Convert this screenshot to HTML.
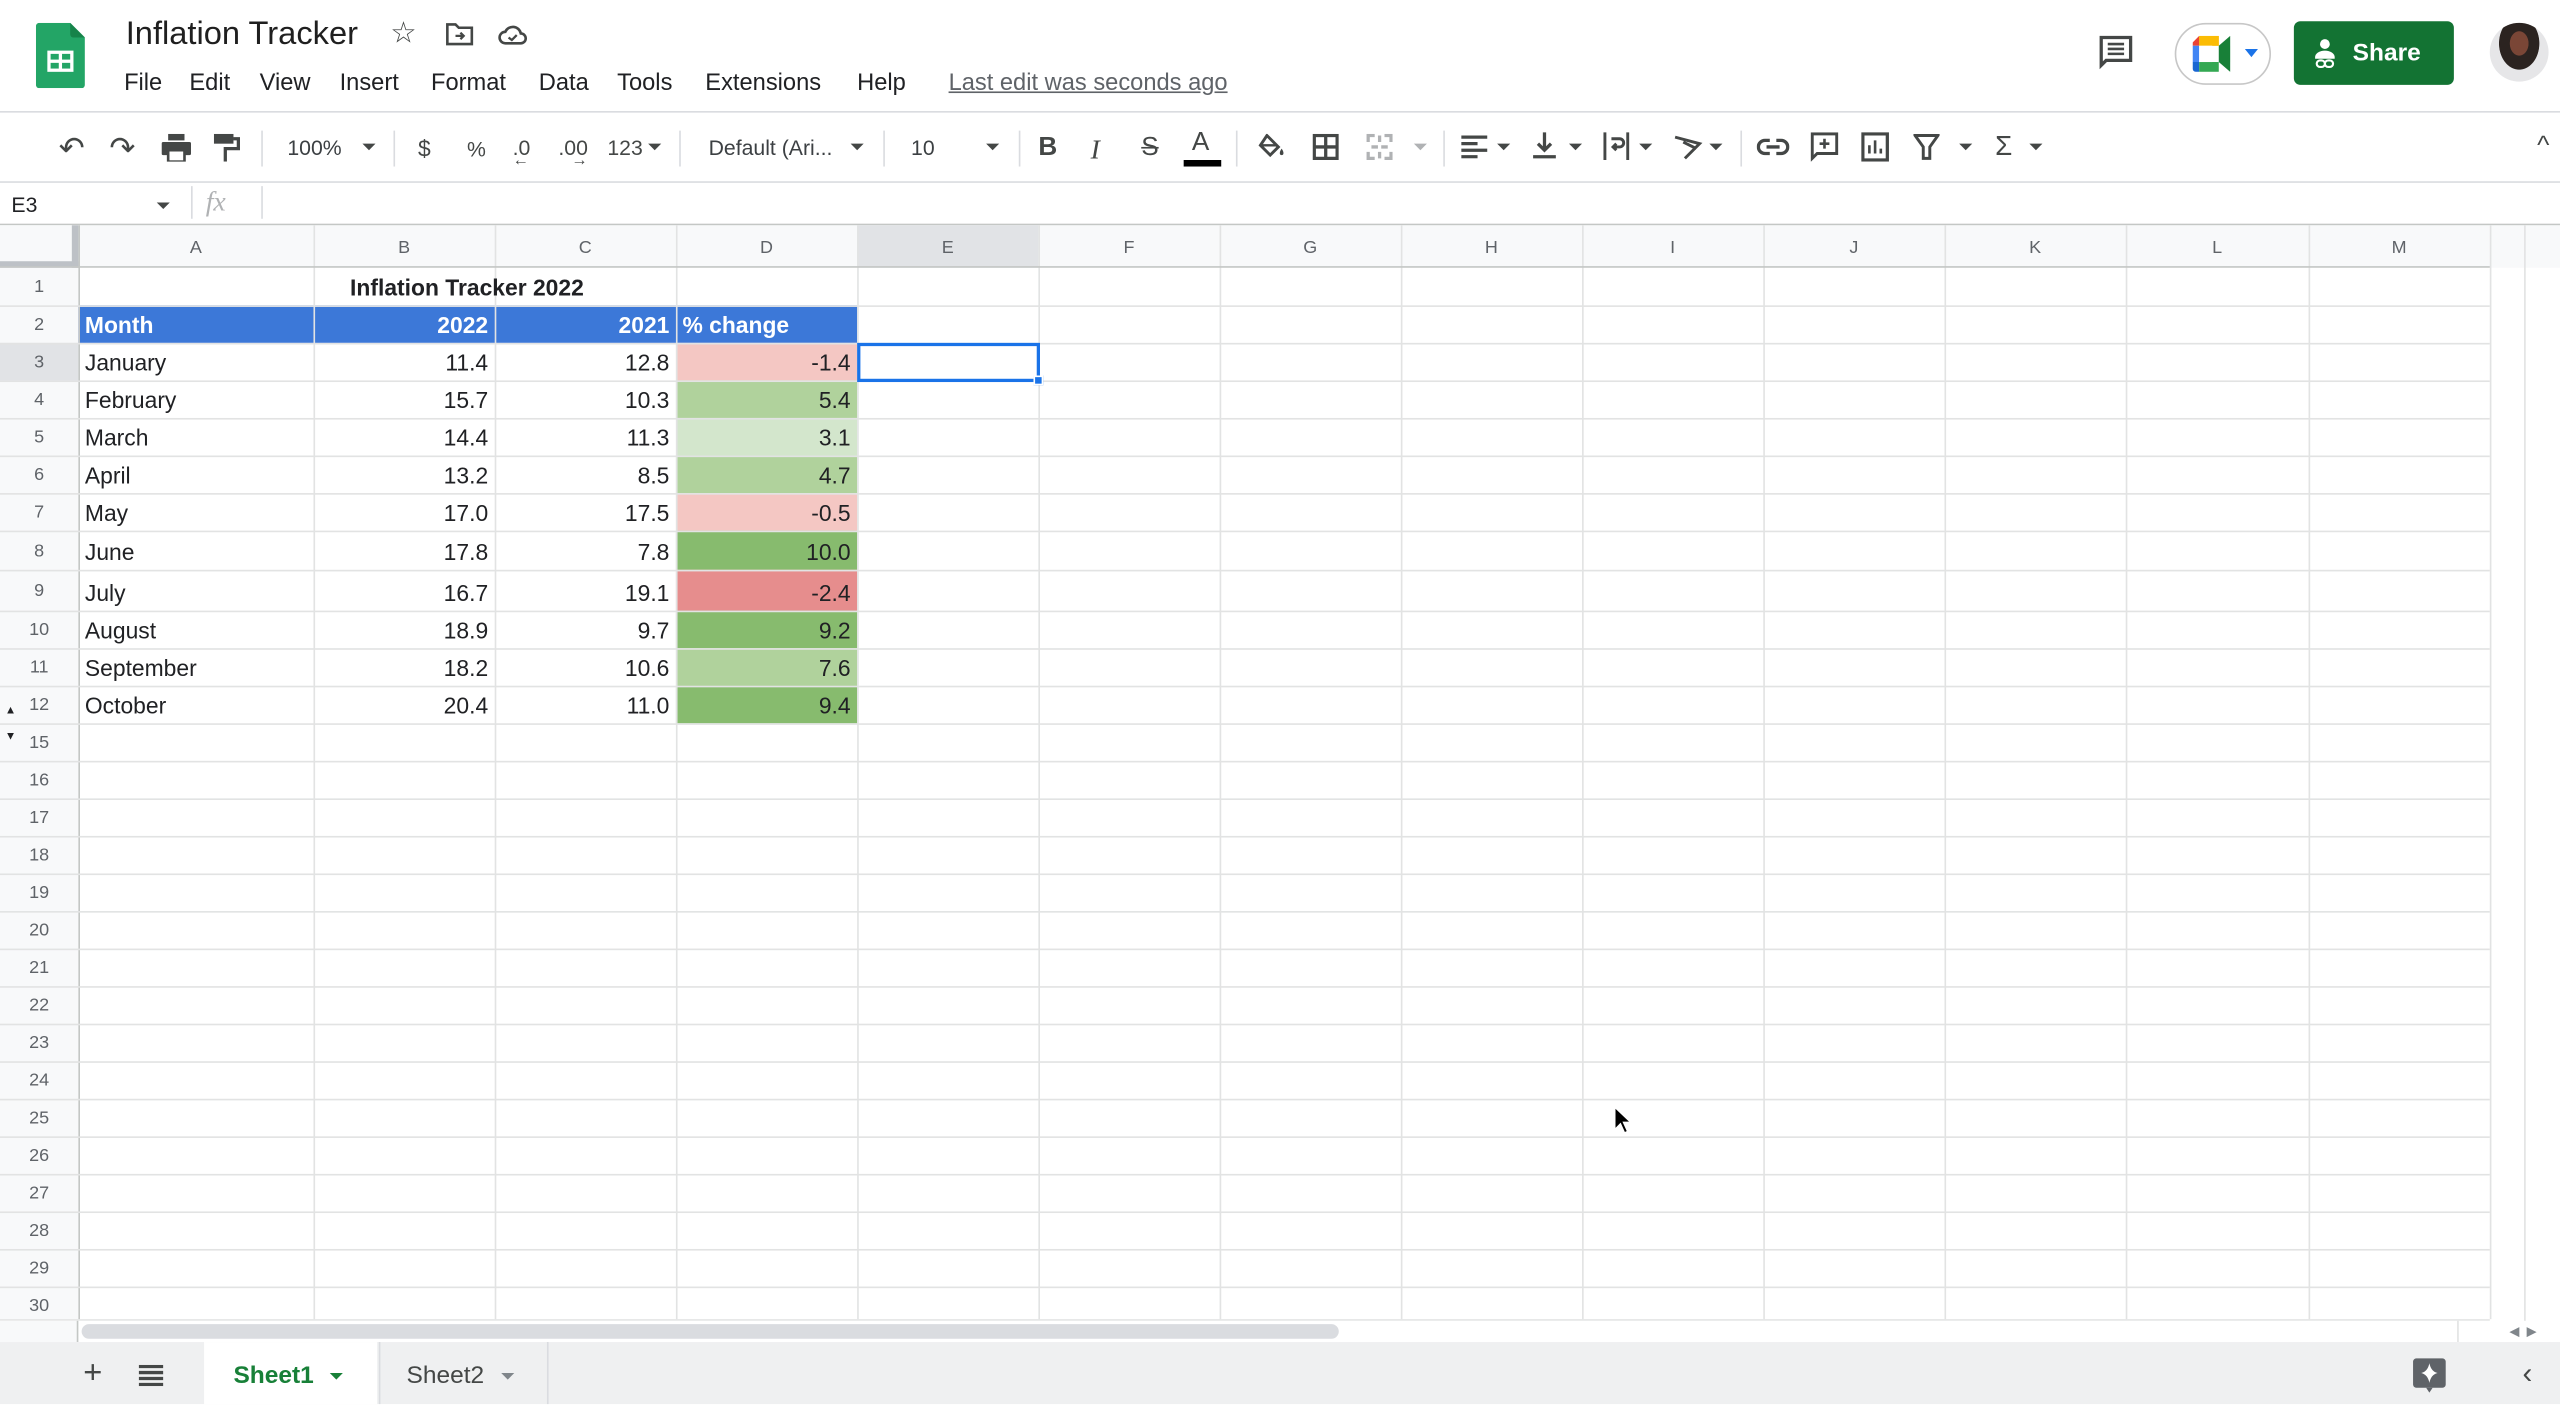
<!DOCTYPE html>
<html><head><meta charset="utf-8"><style>
*{margin:0;padding:0;box-sizing:border-box}
html,body{width:2560px;height:1404px;overflow:hidden;background:#fff}
#s{position:absolute;left:0;top:0;width:1568px;height:860px;transform:scale(1.63265);transform-origin:0 0;font-family:"Liberation Sans",Arial,sans-serif;color:#202124;background:#fff}
.a{position:absolute}
.m{font-size:14.5px;top:43px;color:#202124}
.ic{position:absolute;color:#444746;font-size:14px}
.sep{position:absolute;top:80px;width:1px;height:22px;background:#dadce0}
.vl{position:absolute;top:138px;height:670px;width:1px;background:#e2e3e3}
.hl{position:absolute;left:0;width:1525px;height:1px;background:#e2e3e3}
.rn{position:absolute;left:0;width:48px;text-align:center;font-size:11px;color:#5f6368;margin-top:1px}
.ch{position:absolute;top:139px;height:26px;line-height:26px;text-align:center;font-size:11px;color:#5f6368}
.c{position:absolute;font-size:14px;height:23px;line-height:25px;padding:0 4px;white-space:nowrap}
.r{text-align:right}
.dd{display:inline-block;width:0;height:0;border-left:4px solid transparent;border-right:4px solid transparent;border-top:4px solid #444746;vertical-align:middle}
</style></head><body><div id="s">
<svg class="a" style="left:22px;top:14px" width="30" height="40" viewBox="0 0 30 40"><path d="M2 0h19l9 9v29a2 2 0 0 1-2 2H2a2 2 0 0 1-2-2V2a2 2 0 0 1 2-2z" fill="#23a566"/><path d="M21 0l9 9h-7a2 2 0 0 1-2-2z" fill="#16834a"/><rect x="7" y="17" width="16" height="13" fill="#fff"/><rect x="9" y="19" width="5" height="3.5" fill="#23a566"/><rect x="16" y="19" width="5" height="3.5" fill="#23a566"/><rect x="9" y="24.5" width="5" height="3.5" fill="#23a566"/><rect x="16" y="24.5" width="5" height="3.5" fill="#23a566"/></svg>
<div class="a" style="left:77px;top:10px;font-size:20px;color:#1f1f1f">Inflation Tracker</div>
<div class="a" style="left:239px;top:10px;font-size:18px;color:#444746">☆</div>
<svg class="a" style="left:273px;top:14px" width="17" height="14" viewBox="0 0 17 14"><path d="M1 1h5l2 2h8v10H1z" fill="none" stroke="#444746" stroke-width="1.6"/><path d="M6 8h5M9 6l2 2-2 2" fill="none" stroke="#444746" stroke-width="1.4"/></svg>
<svg class="a" style="left:305px;top:14px" width="18" height="14" viewBox="0 0 18 14"><path d="M4.5 12.5a3.5 3.5 0 0 1 0-7 5 5 0 0 1 9.5 1 3 3 0 0 1 0 6z" fill="none" stroke="#444746" stroke-width="1.6"/><path d="M6.5 9l2 1.5 3-3" fill="none" stroke="#444746" stroke-width="1.4"/></svg>
<div class="a m" style="left:76px">File</div><div class="a m" style="left:116px">Edit</div><div class="a m" style="left:159px">View</div><div class="a m" style="left:208px">Insert</div><div class="a m" style="left:264px">Format</div><div class="a m" style="left:330px">Data</div><div class="a m" style="left:378px">Tools</div><div class="a m" style="left:432px">Extensions</div><div class="a m" style="left:525px">Help</div>
<div class="a m" style="left:581px;color:#5f6368;text-decoration:underline">Last edit was seconds ago</div>
<svg class="a" style="left:1285px;top:21px" width="22" height="22" viewBox="0 0 22 22"><path d="M2 2h18v14H5l-3 3z" fill="none" stroke="#444746" stroke-width="2"/><path d="M6 6h10M6 9h10M6 12h10" stroke="#444746" stroke-width="1.6"/></svg>
<div class="a" style="left:1332px;top:14px;width:59px;height:38px;border:1px solid #c7c7c7;border-radius:19px;background:#fff"></div>
<svg class="a" style="left:1343px;top:22px" width="28" height="22" viewBox="0 0 28 22"><path d="M4 0h12v6H4z" fill="#fbbc04"/><path d="M0 4l4-4v6H0z" fill="#ea4335"/><path d="M0 6h4v10H0z" fill="#4285f4"/><path d="M0 16h4v6H2a2 2 0 0 1-2-2z" fill="#1967d2"/><path d="M4 16h12v6H4z" fill="#34a853"/><path d="M16 6v10l7 6V0l-7 6z" fill="#188038"/><path d="M16 0v6H4V0z" fill="#fbbc04"/><rect x="4" y="6" width="8" height="10" fill="#fff"/></svg>
<div class="a" style="left:1375px;top:30px;width:0;height:0;border-left:4px solid transparent;border-right:4px solid transparent;border-top:5px solid #1a73e8"></div>
<div class="a" style="left:1405px;top:13px;width:98px;height:39px;background:#137333;border-radius:4px;color:#fff;font-size:15px;font-weight:bold;line-height:39px;padding-left:36px">Share</div>
<svg class="a" style="left:1416px;top:23px" width="16" height="20" viewBox="0 0 16 20"><circle cx="8" cy="4" r="3" fill="#fff"/><path d="M2 12a6 4 0 0 1 12 0v1H2z" fill="#fff"/><rect x="3" y="14" width="5" height="4" rx="2" fill="none" stroke="#fff" stroke-width="1.3"/><rect x="8" y="14" width="5" height="4" rx="2" fill="none" stroke="#fff" stroke-width="1.3"/></svg>
<div class="a" style="left:1525px;top:14px;width:36px;height:36px;border-radius:50%;background:radial-gradient(ellipse at 50% 35%,#7a4636 0 22%,#2b2320 23% 48%,#e6e6e8 49%)"></div>
<div class="a" style="left:0;top:68px;width:1568px;height:1px;background:#dadce0"></div>
<div class="ic" style="left:36px;top:80px;font-size:19px">↶</div><div class="ic" style="left:67px;top:80px;font-size:19px">↷</div>
<svg class="a" style="left:99px;top:82px" width="18" height="17" viewBox="0 0 18 17"><rect x="4" y="0" width="10" height="4" fill="#444746"/><rect x="0" y="5" width="18" height="8" rx="1" fill="#444746"/><rect x="4" y="10" width="10" height="7" fill="#fff" stroke="#444746" stroke-width="1.6"/></svg>
<svg class="a" style="left:131px;top:82px" width="16" height="17" viewBox="0 0 16 17"><rect x="0" y="0" width="12" height="6" fill="#444746"/><path d="M12 3h3v6H7v8" fill="none" stroke="#444746" stroke-width="2"/></svg>
<div class="sep" style="left:160px"></div>
<div class="ic" style="left:176px;top:83px;font-size:13px;color:#3c4043">100%</div><span class="a dd" style="left:222px;top:88px"></span>
<div class="sep" style="left:241px"></div>
<div class="ic" style="left:256px;top:83px;font-size:14px">$</div><div class="ic" style="left:286px;top:84px;font-size:13px">%</div>
<div class="ic" style="left:314px;top:83px;font-size:13px">.0</div><div class="ic" style="left:314px;top:93px;font-size:10px">←</div>
<div class="ic" style="left:342px;top:83px;font-size:13px">.00</div><div class="ic" style="left:350px;top:93px;font-size:10px">→</div>
<div class="ic" style="left:372px;top:83px;font-size:13px">123</div><span class="a dd" style="left:397px;top:88px"></span>
<div class="sep" style="left:416px"></div>
<div class="ic" style="left:434px;top:83px;font-size:13px;color:#3c4043">Default (Ari...</div><span class="a dd" style="left:521px;top:88px"></span>
<div class="sep" style="left:541px"></div>
<div class="ic" style="left:558px;top:83px;font-size:13px;color:#3c4043">10</div><span class="a dd" style="left:604px;top:88px"></span>
<div class="sep" style="left:624px"></div>
<div class="ic" style="left:636px;top:82px;font-size:16px;font-weight:bold">B</div>
<div class="ic" style="left:668px;top:82px;font-size:17px;font-style:italic;font-family:'Liberation Serif',serif">I</div>
<div class="ic" style="left:699px;top:82px;font-size:16px;text-decoration:line-through">S</div>
<div class="ic" style="left:730px;top:79px;font-size:16px">A</div><div class="a" style="left:725px;top:98px;width:23px;height:4px;background:#000"></div>
<div class="sep" style="left:757px"></div>
<svg class="a" style="left:770px;top:82px" width="18" height="16" viewBox="0 0 18 16"><path d="M6 1l7 7-5 5-6-6z" fill="none" stroke="#444746" stroke-width="1.8"/><path d="M2 7h10" stroke="#444746" stroke-width="1.5"/><path d="M15 9c-1.5 2-1.5 4 0 4s1.5-2 0-4z" fill="#444746"/></svg>
<svg class="a" style="left:804px;top:82px" width="16" height="16" viewBox="0 0 16 16"><rect x="1" y="1" width="14" height="14" fill="none" stroke="#444746" stroke-width="2"/><path d="M8 1v14M1 8h14" stroke="#444746" stroke-width="2"/></svg>
<svg class="a" style="left:837px;top:82px" width="16" height="16" viewBox="0 0 16 16"><path d="M1 5V1h4M11 1h4v4M15 11v4h-4M5 15H1v-4M3 8h4M13 8H9M8 1v4M8 11v4" fill="none" stroke="#b0b2b4" stroke-width="2"/></svg>
<span class="a dd" style="left:866px;top:88px;border-top-color:#b0b2b4"></span>
<div class="sep" style="left:884px"></div>
<svg class="a" style="left:895px;top:83px" width="16" height="14" viewBox="0 0 16 14"><path d="M0 1h16M0 5h10M0 9h16M0 13h10" stroke="#444746" stroke-width="2"/></svg><span class="a dd" style="left:917px;top:88px"></span>
<svg class="a" style="left:939px;top:81px" width="14" height="17" viewBox="0 0 14 17"><path d="M7 0v11M3 7l4 4 4-4M0 15h14" fill="none" stroke="#444746" stroke-width="2"/></svg><span class="a dd" style="left:961px;top:88px"></span>
<svg class="a" style="left:982px;top:81px" width="16" height="17" viewBox="0 0 16 17"><path d="M1 0v17M15 0v17M5 4h5a2.5 2.5 0 0 1 0 5H6M8 7l-2 2 2 2" fill="none" stroke="#444746" stroke-width="1.8"/></svg><span class="a dd" style="left:1004px;top:88px"></span>
<svg class="a" style="left:1025px;top:81px" width="18" height="17" viewBox="0 0 18 17"><path d="M1 3l15 4-9 9M6 6l8 4" fill="none" stroke="#444746" stroke-width="1.8"/></svg><span class="a dd" style="left:1047px;top:88px"></span>
<div class="sep" style="left:1066px"></div>
<svg class="a" style="left:1076px;top:84px" width="20" height="12" viewBox="0 0 20 12"><path d="M8 2H5a4 4 0 0 0 0 8h3M12 2h3a4 4 0 0 1 0 8h-3M6 6h8" fill="none" stroke="#444746" stroke-width="2"/></svg>
<svg class="a" style="left:1109px;top:81px" width="17" height="18" viewBox="0 0 17 18"><path d="M1 1h15v12H4l-3 3z" fill="none" stroke="#444746" stroke-width="1.8"/><path d="M8.5 4v6M5.5 7h6" stroke="#444746" stroke-width="1.6"/></svg>
<svg class="a" style="left:1140px;top:81px" width="17" height="18" viewBox="0 0 17 18"><rect x="1" y="1" width="15" height="16" fill="none" stroke="#444746" stroke-width="2"/><path d="M5 13V8M8.5 13V5M12 13v-3" stroke="#444746" stroke-width="1.6"/></svg>
<svg class="a" style="left:1172px;top:82px" width="16" height="16" viewBox="0 0 16 16"><path d="M1 1h14l-5 7v7H6V8z" fill="none" stroke="#444746" stroke-width="1.8"/></svg><span class="a dd" style="left:1200px;top:88px"></span>
<div class="ic" style="left:1222px;top:80px;font-size:17px">Σ</div><span class="a dd" style="left:1243px;top:88px"></span>
<div class="ic" style="left:1554px;top:81px;font-size:16px">^</div>
<div class="a" style="left:0;top:111px;width:1568px;height:1px;background:#dadce0"></div>
<div class="a" style="left:7px;top:118px;font-size:13px">E3</div><span class="a dd" style="left:96px;top:124px"></span>
<div class="a" style="left:117px;top:114px;width:1px;height:20px;background:#dadce0"></div>
<div class="a" style="left:126px;top:114px;font-size:17px;font-style:italic;color:#b0b2b4;font-family:'Liberation Serif',serif">fx</div>
<div class="a" style="left:160px;top:114px;width:1px;height:20px;background:#dadce0"></div>
<div class="a" style="left:0;top:137px;width:1568px;height:1px;background:#c4c7c5"></div>
<div class="a" style="left:0;top:138px;width:1568px;height:26px;background:#f8f9fa"></div>
<div class="a" style="left:0;top:138px;width:48px;height:673px;background:#f8f9fa"></div>
<div class="a" style="left:525px;top:138px;width:111px;height:26px;background:#e1e3e6"></div>
<div class="a" style="left:0;top:210px;width:48px;height:23px;background:#e1e3e6"></div>
<div class="a" style="left:0;top:138px;width:48px;height:26px;border-right:4px solid #bdc1c6;border-bottom:4px solid #bdc1c6"></div>
<div class="a" style="left:48px;top:187px;width:477px;height:23px;background:#3c78d8"></div>
<div class="a" style="left:414px;top:210px;width:111px;height:23px;background:#f4c7c3"></div>
<div class="a" style="left:414px;top:233px;width:111px;height:23px;background:#b0d29c"></div>
<div class="a" style="left:414px;top:256px;width:111px;height:23px;background:#d3e6cc"></div>
<div class="a" style="left:414px;top:279px;width:111px;height:23px;background:#b0d29c"></div>
<div class="a" style="left:414px;top:302px;width:111px;height:23px;background:#f4c7c3"></div>
<div class="a" style="left:414px;top:325px;width:111px;height:24px;background:#87bb6e"></div>
<div class="a" style="left:414px;top:349px;width:111px;height:25px;background:#e68d8d"></div>
<div class="a" style="left:414px;top:374px;width:111px;height:23px;background:#87bb6e"></div>
<div class="a" style="left:414px;top:397px;width:111px;height:23px;background:#b0d29c"></div>
<div class="a" style="left:414px;top:420px;width:111px;height:23px;background:#87bb6e"></div>
<div class="vl" style="left:48px;background:#c4c7c5"></div><div class="vl" style="left:192px"></div><div class="vl" style="left:303px"></div><div class="vl" style="left:414px"></div><div class="vl" style="left:525px"></div><div class="vl" style="left:636px"></div><div class="vl" style="left:747px"></div><div class="vl" style="left:858px"></div><div class="vl" style="left:969px"></div><div class="vl" style="left:1080px"></div><div class="vl" style="left:1191px"></div><div class="vl" style="left:1302px"></div><div class="vl" style="left:1414px"></div><div class="vl" style="left:1525px"></div>
<div class="a" style="left:1546px;top:138px;width:1px;height:684px;background:#e2e3e3"></div>
<div class="hl" style="top:163px;background:#c4c7c5"></div><div class="hl" style="top:187px"></div><div class="hl" style="top:210px"></div><div class="hl" style="top:233px"></div><div class="hl" style="top:256px"></div><div class="hl" style="top:279px"></div><div class="hl" style="top:302px"></div><div class="hl" style="top:325px"></div><div class="hl" style="top:349px"></div><div class="hl" style="top:374px"></div><div class="hl" style="top:397px"></div><div class="hl" style="top:420px"></div><div class="hl" style="top:443px"></div><div class="hl" style="top:466px"></div><div class="hl" style="top:489px"></div><div class="hl" style="top:512px"></div><div class="hl" style="top:535px"></div><div class="hl" style="top:558px"></div><div class="hl" style="top:581px"></div><div class="hl" style="top:604px"></div><div class="hl" style="top:627px"></div><div class="hl" style="top:650px"></div><div class="hl" style="top:673px"></div><div class="hl" style="top:696px"></div><div class="hl" style="top:719px"></div><div class="hl" style="top:742px"></div><div class="hl" style="top:765px"></div><div class="hl" style="top:788px"></div><div class="hl" style="top:808px"></div>
<div class="ch" style="left:48px;width:144px">A</div><div class="ch" style="left:192px;width:111px">B</div><div class="ch" style="left:303px;width:111px">C</div><div class="ch" style="left:414px;width:111px">D</div><div class="ch" style="left:525px;width:111px">E</div><div class="ch" style="left:636px;width:111px">F</div><div class="ch" style="left:747px;width:111px">G</div><div class="ch" style="left:858px;width:111px">H</div><div class="ch" style="left:969px;width:111px">I</div><div class="ch" style="left:1080px;width:111px">J</div><div class="ch" style="left:1191px;width:111px">K</div><div class="ch" style="left:1302px;width:112px">L</div><div class="ch" style="left:1414px;width:111px">M</div>
<div class="rn" style="top:169px">1</div><div class="rn" style="top:192px">2</div><div class="rn" style="top:215px">3</div><div class="rn" style="top:238px">4</div><div class="rn" style="top:261px">5</div><div class="rn" style="top:284px">6</div><div class="rn" style="top:307px">7</div><div class="rn" style="top:331px">8</div><div class="rn" style="top:355px">9</div><div class="rn" style="top:379px">10</div><div class="rn" style="top:402px">11</div><div class="rn" style="top:425px">12</div><div class="rn" style="top:448px">15</div>
<div class="a" style="left:3px;top:432px;font-size:7px;color:#202124">▲</div><div class="a" style="left:3px;top:448px;font-size:7px;color:#202124">▼</div>
<div class="rn" style="top:471px">16</div><div class="rn" style="top:494px">17</div><div class="rn" style="top:517px">18</div><div class="rn" style="top:540px">19</div><div class="rn" style="top:563px">20</div><div class="rn" style="top:586px">21</div><div class="rn" style="top:609px">22</div><div class="rn" style="top:632px">23</div><div class="rn" style="top:655px">24</div><div class="rn" style="top:678px">25</div><div class="rn" style="top:701px">26</div><div class="rn" style="top:724px">27</div><div class="rn" style="top:747px">28</div><div class="rn" style="top:770px">29</div><div class="rn" style="top:793px">30</div>
<div class="c" style="left:192px;top:164px;width:188px;text-align:center;font-weight:bold">Inflation Tracker 2022</div>
<div class="c" style="left:48px;top:187px;color:#fff;font-weight:bold">Month</div>
<div class="c r" style="left:192px;top:187px;width:111px;color:#fff;font-weight:bold">2022</div>
<div class="c r" style="left:303px;top:187px;width:111px;color:#fff;font-weight:bold">2021</div>
<div class="c" style="left:414px;top:187px;color:#fff;font-weight:bold">% change</div>
<div class="c" style="left:48px;top:210px">January</div><div class="c r" style="left:192px;top:210px;width:111px">11.4</div><div class="c r" style="left:303px;top:210px;width:111px">12.8</div><div class="c r" style="left:414px;top:210px;width:111px">-1.4</div>
<div class="c" style="left:48px;top:233px">February</div><div class="c r" style="left:192px;top:233px;width:111px">15.7</div><div class="c r" style="left:303px;top:233px;width:111px">10.3</div><div class="c r" style="left:414px;top:233px;width:111px">5.4</div>
<div class="c" style="left:48px;top:256px">March</div><div class="c r" style="left:192px;top:256px;width:111px">14.4</div><div class="c r" style="left:303px;top:256px;width:111px">11.3</div><div class="c r" style="left:414px;top:256px;width:111px">3.1</div>
<div class="c" style="left:48px;top:279px">April</div><div class="c r" style="left:192px;top:279px;width:111px">13.2</div><div class="c r" style="left:303px;top:279px;width:111px">8.5</div><div class="c r" style="left:414px;top:279px;width:111px">4.7</div>
<div class="c" style="left:48px;top:302px">May</div><div class="c r" style="left:192px;top:302px;width:111px">17.0</div><div class="c r" style="left:303px;top:302px;width:111px">17.5</div><div class="c r" style="left:414px;top:302px;width:111px">-0.5</div>
<div class="c" style="left:48px;top:326px">June</div><div class="c r" style="left:192px;top:326px;width:111px">17.8</div><div class="c r" style="left:303px;top:326px;width:111px">7.8</div><div class="c r" style="left:414px;top:326px;width:111px">10.0</div>
<div class="c" style="left:48px;top:351px">July</div><div class="c r" style="left:192px;top:351px;width:111px">16.7</div><div class="c r" style="left:303px;top:351px;width:111px">19.1</div><div class="c r" style="left:414px;top:351px;width:111px">-2.4</div>
<div class="c" style="left:48px;top:374px">August</div><div class="c r" style="left:192px;top:374px;width:111px">18.9</div><div class="c r" style="left:303px;top:374px;width:111px">9.7</div><div class="c r" style="left:414px;top:374px;width:111px">9.2</div>
<div class="c" style="left:48px;top:397px">September</div><div class="c r" style="left:192px;top:397px;width:111px">18.2</div><div class="c r" style="left:303px;top:397px;width:111px">10.6</div><div class="c r" style="left:414px;top:397px;width:111px">7.6</div>
<div class="c" style="left:48px;top:420px">October</div><div class="c r" style="left:192px;top:420px;width:111px">20.4</div><div class="c r" style="left:303px;top:420px;width:111px">11.0</div><div class="c r" style="left:414px;top:420px;width:111px">9.4</div>
<div class="a" style="left:525px;top:210px;width:112px;height:24px;border:2px solid #1a73e8"></div>
<div class="a" style="left:633px;top:230px;width:6px;height:6px;background:#1a73e8;border:1px solid #fff"></div>
<svg class="a" style="left:988px;top:677px" width="12" height="18" viewBox="0 0 12 18"><path d="M1 1v14l3.5-3.5 2.5 5.5 2-1-2.5-5.5H11z" fill="#000" stroke="#fff" stroke-width="1"/></svg>
<div class="a" style="left:0;top:809px;width:1568px;height:13px;background:#fff"></div>
<div class="a" style="left:0;top:809px;width:48px;height:13px;background:#f8f9fa;border-right:1px solid #c4c7c5"></div>
<div class="a" style="left:50px;top:811px;width:770px;height:9px;border-radius:5px;background:#dadce0"></div>
<div class="a" style="left:1505px;top:809px;width:63px;height:13px;border-left:1px solid #e2e3e3;font-size:8px;color:#80868b;line-height:13px;padding-left:31px">◀ &nbsp;▶</div>
<div class="a" style="left:0;top:822px;width:1568px;height:38px;background:#eff0f1"></div>
<div class="a" style="left:51px;top:830px;font-size:20px;color:#444746">+</div>
<svg class="a" style="left:85px;top:836px" width="15" height="13" viewBox="0 0 15 13"><path d="M0 1h15M0 4.7h15M0 8.3h15M0 12h15" stroke="#444746" stroke-width="2"/></svg>
<div class="a" style="left:125px;top:822px;width:106px;height:38px;background:#fff;color:#188038;font-weight:bold;font-size:15px;line-height:42px;padding-left:18px">Sheet1 <span class="dd" style="border-top-color:#188038;margin-left:6px"></span></div>
<div class="a" style="left:232px;top:822px;width:1px;height:38px;background:#dadce0"></div>
<div class="a" style="left:249px;top:822px;color:#444746;font-size:15px;line-height:42px">Sheet2 <span class="dd" style="border-top-color:#80868b;margin-left:6px"></span></div>
<div class="a" style="left:335px;top:822px;width:1px;height:38px;background:#dadce0"></div>
<svg class="a" style="left:1477px;top:831px" width="22" height="24" viewBox="0 0 22 24"><rect x="1" y="1" width="20" height="18" rx="2" fill="#5f6368"/><path d="M9 19l2 3 2-3z" fill="#5f6368"/><path d="M11 4q1 5 5 6q-4 1-5 6q-1-5-5-6q4-1 5-6z" fill="#fff"/></svg>
<div class="a" style="left:1545px;top:831px;font-size:18px;color:#444746">‹</div>
</div></body></html>
